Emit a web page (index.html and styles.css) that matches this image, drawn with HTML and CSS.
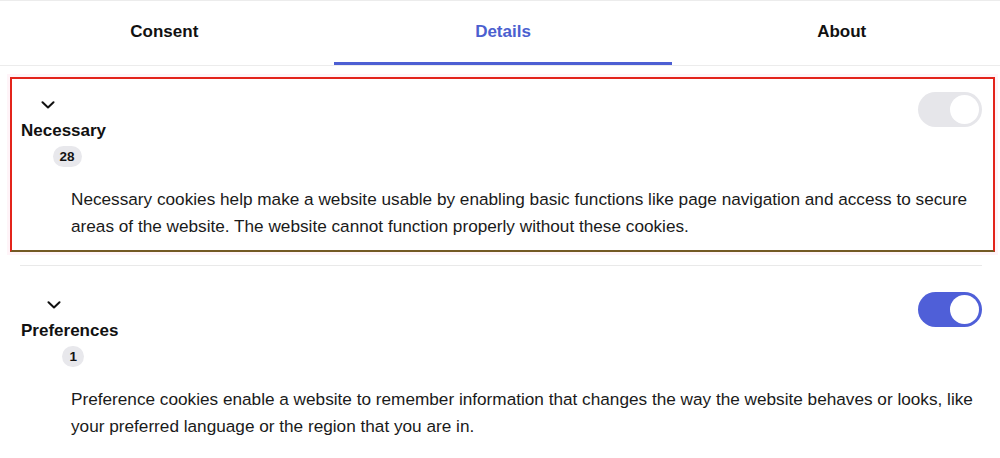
FILE: index.html
```html
<!DOCTYPE html>
<html lang="en">
<head>
    <meta charset="UTF-8">
    <meta name="viewport" content="width=device-width, initial-scale=1.0">
    <title>Cookie details</title>
    <link rel="stylesheet" href="styles.css">
</head>
<body>
    <nav class="tabs">
        <a class="tab">Consent</a>
        <a class="tab active">Details</a>
        <a class="tab">About</a>
    </nav>

    <div class="categories">
        <div class="category is-focused">
            <div class="category-head">
                <div class="category-label">
                    <svg class="chevron" width="14" height="8" viewBox="0 0 14 8">
                        <polyline points="1.5,1.2 7,6.5 12.5,1.2" fill="none" stroke="#111" stroke-width="2" stroke-linecap="round" stroke-linejoin="round"/>
                    </svg>
                    <span class="category-title">Necessary</span>
                    <span class="badge">28</span>
                </div>
                <span class="toggle disabled"><span class="knob"></span></span>
            </div>
            <p class="category-text">Necessary cookies help make a website usable by enabling basic functions like page navigation and access to secure areas of the website. The website cannot function properly without these cookies.</p>
        </div>

        <div class="divider"></div>

        <div class="category">
            <div class="category-head">
                <div class="category-label">
                    <svg class="chevron" width="14" height="8" viewBox="0 0 14 8">
                        <polyline points="1.5,1.2 7,6.5 12.5,1.2" fill="none" stroke="#111" stroke-width="2" stroke-linecap="round" stroke-linejoin="round"/>
                    </svg>
                    <span class="category-title">Preferences</span>
                    <span class="badge">1</span>
                </div>
                <span class="toggle on"><span class="knob"></span></span>
            </div>
            <p class="category-text">Preference cookies enable a website to remember information that changes the way the website behaves or looks, like your preferred language or the region that you are in.</p>
        </div>
    </div>
</body>
</html>
```

FILE: styles.css
```css
body {
    margin: 0;
    font-family: "Liberation Sans", Arial, Helvetica, sans-serif;
    color: #141414;
    background: #fff;
    overflow-x: hidden;
}
.tabs {
    display: flex;
    margin: 0 -11px 0 -5px;
    border-top: 1px solid #ececec;
    border-bottom: 1px solid #ececec;
}
.tab {
    flex: 1;
    height: 64px;
    box-sizing: border-box;
    display: flex;
    align-items: center;
    justify-content: center;
    border-bottom: 3px solid transparent;
    font-size: 17px;
    font-weight: bold;
    color: #111;
    cursor: pointer;
}
.tab.active {
    color: #4b5fcf;
    border-bottom-color: #4d5fd3;
}
.categories {
    padding: 11px 18px 0 20px;
}
.category {
    padding: 0 0 10px 1px;
}
.category.is-focused {
    margin: 0 -13px 0 -10px;
    padding: 13px 11px 10px 9px;
    border: 2px solid #e3241b;
    border-bottom-color: #735a24;
    box-shadow: 0 0 0 3px rgba(255, 120, 160, 0.08);
}
.category-head {
    display: flex;
    justify-content: space-between;
    align-items: flex-start;
}
.category-label {
    display: flex;
    flex-direction: column;
    align-items: center;
}
.chevron {
    display: block;
    margin-top: 9px;
    margin-right: 32px;
}
.category-title {
    margin-top: 11px;
    font-size: 17px;
    line-height: 22px;
    font-weight: bold;
    color: #111;
}
.badge {
    margin-top: 4px;
    margin-left: 7px;
    min-width: 20px;
    height: 21px;
    box-sizing: border-box;
    padding: 0 7px;
    border-radius: 11px;
    background: #e8e8ec;
    font-size: 13.5px;
    font-weight: bold;
    line-height: 21px;
    text-align: center;
    color: #141414;
}
.toggle {
    width: 64px;
    height: 35px;
    box-sizing: border-box;
    padding: 3px;
    border-radius: 18px;
    display: flex;
    justify-content: flex-end;
    background: #e6e6ea;
}
.toggle.on {
    background: #4f5fd8;
}
.knob {
    width: 29px;
    height: 29px;
    border-radius: 50%;
    background: #fff;
}
.category-text {
    margin: 19px 0 0 50px;
    font-size: 17.2px;
    line-height: 27px;
    color: #1a1a1a;
}
.divider {
    height: 1px;
    background: #e9e9e9;
    margin: 13px 0 26px;
}
```
